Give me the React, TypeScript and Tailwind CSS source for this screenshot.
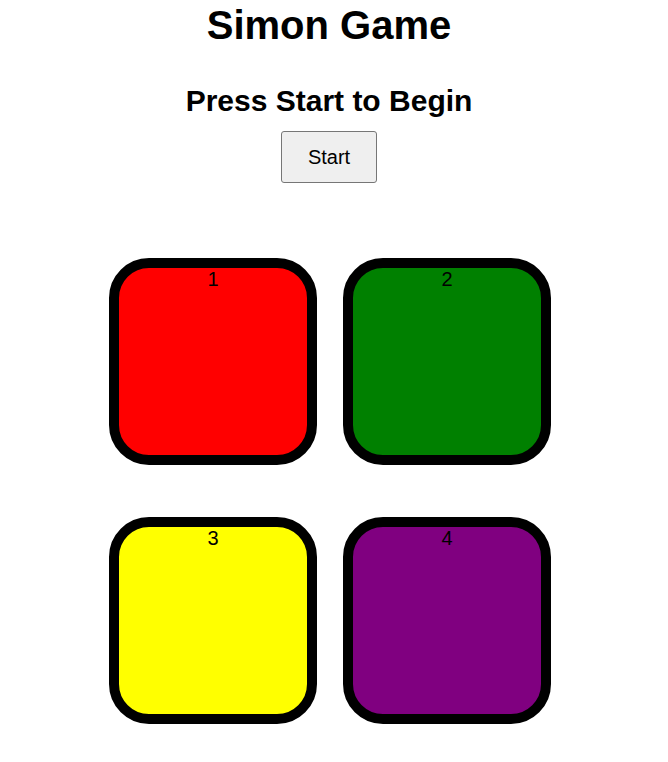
const boxes = [
  { n: 1, color: 'bg-[#ff0000]' },
  { n: 2, color: 'bg-[#008000]' },
  { n: 3, color: 'bg-[#ffff00]' },
  { n: 4, color: 'bg-[#800080]' },
];

export default function App() {
  return (
    <div className="w-[658px] bg-white text-black font-['Liberation_Sans',Arial,sans-serif]">
      <div className="flex flex-col items-center">
        <h1 className="mt-[3px] text-[40px] font-bold leading-[45px]">Simon Game</h1>
        <h2 className="mt-[36px] text-[30px] font-bold leading-[34px]">Press Start to Begin</h2>
        <button className="mt-[13px] h-[52px] w-[96px] rounded-[3px] border border-[#767676] bg-[#efefef] text-[20px] leading-[23px]">
          Start
        </button>
      </div>
      <div className="mt-[75px] grid grid-cols-[208px_208px] justify-center gap-x-[26px] gap-y-[52px] pl-[2px]">
        {boxes.map((b) => (
          <div
            key={b.n}
            className={`h-[207px] rounded-[40px] border-[10px] border-black text-center text-[20px] leading-[23px] ${b.color}`}
          >
            {b.n}
          </div>
        ))}
      </div>
    </div>
  );
}
